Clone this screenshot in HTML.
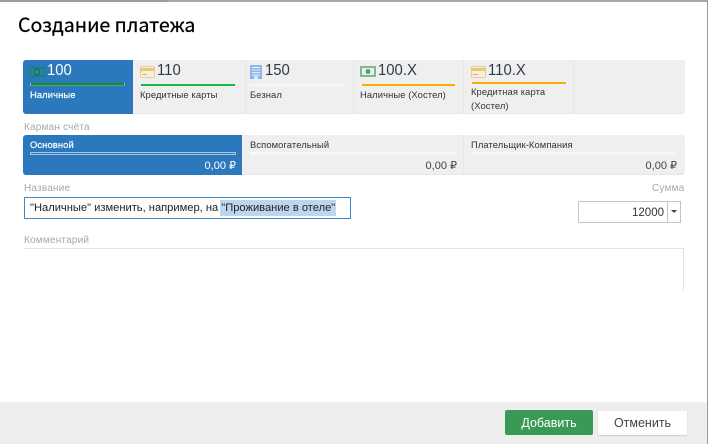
<!DOCTYPE html>
<html lang="ru"><head><meta charset="utf-8"><style>
*{box-sizing:border-box}
html,body{margin:0;padding:0}
body{width:708px;height:444px;overflow:hidden;background:#fff;position:relative;font-family:"Liberation Sans","Noto Sans CJK SC",sans-serif;color:#333}
.a{position:absolute;white-space:nowrap}
.n{font-size:16px;line-height:18px;color:#2f3a48;font-family:"Liberation Sans",sans-serif;transform:scaleX(.93);transform-origin:0 0}
.l{font-size:9.400px;line-height:15px;color:#333;letter-spacing:.1px}
.g{font-size:10px;line-height:12px;color:#a8a8a8;letter-spacing:.2px}
.b{height:2px}
</style></head><body>
<div class="a" style="left:0;top:0;width:167px;height:2px;background:#9c9c9c"></div>
<div class="a" style="left:167px;top:0;width:541px;height:2px;background:#a8a8a8"></div>
<div class="a" style="left:707px;top:0;width:1px;height:444px;background:#9a9a9a"></div>
<div class="a" style="left:18px;top:10px;font-size:19.600px;line-height:27px;color:#000;-webkit-text-stroke:.25px #000;font-family:'Noto Sans CJK SC','Liberation Sans',sans-serif">Создание платежа</div>

<div class="a" style="left:23px;top:60px;width:662px;height:54px;background:#efefef;border-radius:3px;border-bottom:1px solid #e6e6e6"></div>
<div class="a" style="left:23px;top:60px;width:110px;height:54px;background:#2b78bc;border-radius:3px 0 0 3px"></div>
<div class="a" style="left:245px;top:60px;width:1px;height:53px;background:#e6e6e6"></div>
<div class="a" style="left:353px;top:60px;width:1px;height:53px;background:#e6e6e6"></div>
<div class="a" style="left:463px;top:60px;width:1px;height:53px;background:#e6e6e6"></div>
<div class="a" style="left:573px;top:60px;width:1px;height:53px;background:#e6e6e6"></div>

<svg class="a" style="left:29px;top:67px" width="16" height="10"><rect width="16" height="10" fill="#1a7f86"/><rect x="2" y="2" width="12" height="6" fill="#2a8a8a"/><circle cx="8" cy="5" r="3" fill="none" stroke="#14686e"/></svg>
<div class="a n" style="left:47px;top:62px;color:#fff">100</div>
<div class="a" style="left:30px;top:83px;width:95px;height:3px;background:#0c8f2e;border-left:1px solid #8fb5d8;border-right:1px solid #8fb5d8;border-bottom:1px solid #5c9a78"></div>
<div class="a l" style="left:30px;top:87px;color:#fff;-webkit-text-stroke:.2px #fff">Наличные</div>

<svg class="a" style="left:140px;top:66px" width="15" height="12"><rect x=".5" y=".5" width="14" height="11" rx="1" fill="#f6efdc" stroke="#e8cf95"/><rect y="2" width="15" height="3" fill="#e8c878"/><rect x="2" y="8" width="5" height="1" fill="#cdb47a"/></svg>
<div class="a n" style="left:157px;top:62px">110</div>
<div class="a b" style="left:141px;top:84px;width:94px;background:#14bb4a"></div>
<div class="a l" style="left:140px;top:87px">Кредитные карты</div>

<svg class="a" style="left:250px;top:65px" width="12" height="14"><rect width="12" height="14" fill="#8fb8ea"/><path d="M2 2.500h8M2 5h8M2 7.500h8M2 10h8" stroke="#e8f0fa" stroke-width="1"/><rect x="4.500" y="11" width="3" height="3" fill="#e8f0fa"/></svg>
<div class="a n" style="left:265px;top:62px">150</div>
<div class="a b" style="left:250px;top:84px;width:96px;background:#f7f7f7"></div>
<div class="a l" style="left:250px;top:87px">Безнал</div>

<svg class="a" style="left:360px;top:66px" width="16" height="11"><rect width="16" height="11" fill="#7fb98f"/><rect x="2" y="2" width="12" height="7" fill="#e8f2ea"/><circle cx="8" cy="5.500" r="2.500" fill="#5e9f70"/></svg>
<div class="a n" style="left:378px;top:62px">100.X</div>
<div class="a b" style="left:362px;top:84px;width:93px;background:#fdab00"></div>
<div class="a l" style="left:360px;top:87px">Наличные (Хостел)</div>

<svg class="a" style="left:471px;top:66px" width="15" height="12"><rect x=".5" y=".5" width="14" height="11" rx="1" fill="#f6efdc" stroke="#e8cf95"/><rect y="2" width="15" height="3" fill="#e8c878"/><rect x="2" y="8" width="5" height="1" fill="#cdb47a"/></svg>
<div class="a n" style="left:488px;top:62px">110.X</div>
<div class="a b" style="left:472px;top:82px;width:94px;height:2px;background:#fdab00"></div>
<div class="a l" style="left:471px;top:85px;line-height:14px">Кредитная карта<br>(Хостел)</div>

<div class="a g" style="left:24px;top:122px">Карман счёта</div>
<div class="a" style="left:23px;top:135px;width:662px;height:40px;background:#efefef;border-radius:3px;border-bottom:1px solid #e6e6e6"></div>
<div class="a" style="left:23px;top:135px;width:219px;height:40px;background:#2b78bc;border-radius:3px 0 0 3px"></div>
<div class="a" style="left:463px;top:135px;width:1px;height:39px;background:#e6e6e6"></div>
<div class="a l" style="left:30px;top:137px;color:#fff;-webkit-text-stroke:.2px #fff">Основной</div>
<div class="a" style="left:30px;top:152px;width:206px;height:3px;border:1px solid #a9c7e2"></div>
<div class="a" style="left:204px;top:159px;font-size:11px;line-height:14px;color:#fff;width:32px;text-align:right">0,00 ₽</div>
<div class="a l" style="left:250px;top:137px">Вспомогательный</div>
<div class="a" style="left:250px;top:152px;width:206px;height:3px;background:#f7f7f7"></div>
<div class="a" style="left:400px;top:159px;font-size:11px;line-height:14px;color:#444;width:57px;text-align:right">0,00 ₽</div>
<div class="a l" style="left:471px;top:137px">Плательщик-Компания</div>
<div class="a" style="left:471px;top:152px;width:206px;height:3px;background:#f7f7f7"></div>
<div class="a" style="left:620px;top:159px;font-size:11px;line-height:14px;color:#444;width:57px;text-align:right">0,00 ₽</div>

<div class="a g" style="left:24px;top:183px">Название</div>
<div class="a" style="left:24px;top:197px;width:327px;height:22px;border:1px solid #3f87c5"></div>
<div class="a" style="left:220px;top:200px;width:116px;height:16px;background:#bcd6ee"></div>
<div class="a" style="left:30px;top:201px;font-size:11.150px;line-height:14px;color:#222">"Наличные" изменить, например, на "Проживание в отеле"</div>

<div class="a g" style="left:652px;top:183px">Сумма</div>
<div class="a" style="left:578px;top:201px;width:103px;height:22px;border:1px solid #c4c4c4"></div>
<div class="a" style="left:667px;top:202px;width:1px;height:20px;background:#c4c4c4"></div>
<div class="a" style="left:610px;top:206px;width:54px;text-align:right;font-size:11.500px;line-height:15px;color:#333">12000</div>
<svg class="a" style="left:671px;top:210px" width="7" height="4"><path d="M0 0h6L3 3z" fill="#444"/></svg>

<div class="a g" style="left:24px;top:235px">Комментарий</div>
<div class="a" style="left:24px;top:248px;width:660px;height:1px;background:#e2e2e2"></div>
<div class="a" style="left:683px;top:248px;width:1px;height:43px;background:#e2e2e2"></div>

<div class="a" style="left:0;top:402px;width:707px;height:42px;background:#eeeeee"></div>
<div class="a" style="left:505px;top:410px;width:88px;height:25px;background:#3a9a55;border-radius:2px;color:#fff;font-size:12.500px;line-height:27px;text-align:center">Добавить</div>
<div class="a" style="left:598px;top:411px;width:89px;height:24px;background:#fff;box-shadow:0 1px 1px #ccc;color:#444;font-size:12.500px;line-height:25px;text-align:center">Отменить</div>
</body></html>
